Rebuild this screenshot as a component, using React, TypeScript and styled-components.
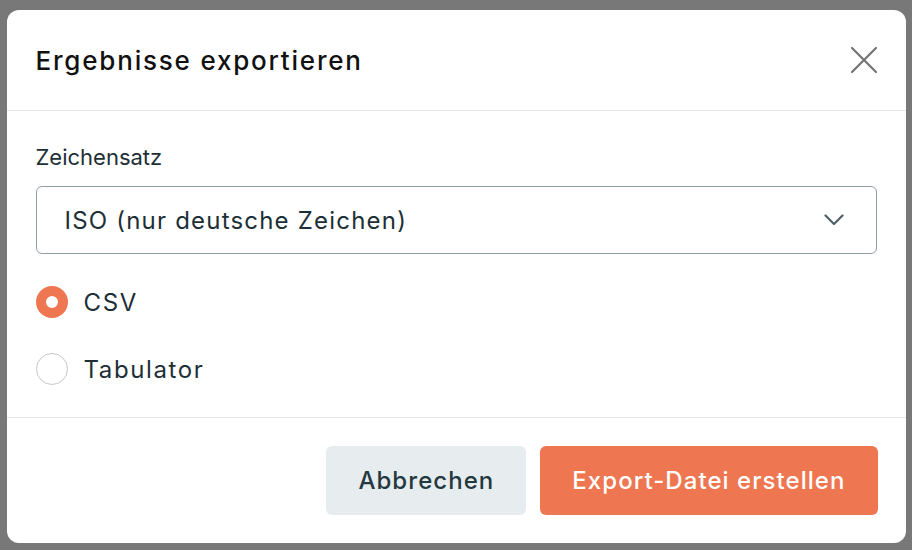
import React, { useState } from "react";
import styled, { createGlobalStyle } from "styled-components";

const GlobalStyle = createGlobalStyle`
  html, body { margin: 0; padding: 0; }
  body {
    background: #787878;
    font-family: Inter, "Open Sans", "Liberation Sans", sans-serif;
    height: 550px;
    overflow: hidden;
  }
  * { box-sizing: border-box; }
`;

const Backdrop = styled.div`
  display: flex;
  justify-content: center;
  padding-top: 10px;
  height: 550px;
  background: #787878;
`;

const Dialog = styled.div`
  width: 899px;
  height: 533px;
  background: #ffffff;
  border-radius: 12px;
  display: flex;
  flex-direction: column;
  overflow: hidden;
`;

const Header = styled.div`
  height: 101px;
  flex: none;
  display: flex;
  align-items: center;
  justify-content: space-between;
  padding: 0 28px 0 29px;
  border-bottom: 1px solid #e6e6e6;
`;

const Title = styled.h2`
  margin: 0;
  font-size: 26px;
  font-weight: 500;
  color: #111111;
  letter-spacing: 1.8px;
`;

const CloseButton = styled.button`
  border: none;
  background: transparent;
  padding: 0;
  width: 28px;
  height: 28px;
  display: flex;
  align-items: center;
  justify-content: center;
  cursor: pointer;
`;

const Body = styled.div`
  padding: 30px 29px 24px;
  display: flex;
  flex-direction: column;
  border-bottom: 1px solid #e6e6e6;
`;

const Label = styled.label`
  font-size: 22px;
  line-height: 32px;
  color: #1d2f36;
  margin-bottom: 13px;
`;

const Select = styled.div`
  height: 68px;
  border: 1px solid #8f9ea3;
  border-radius: 6px;
  display: flex;
  align-items: center;
  justify-content: space-between;
  padding: 0 32px 0 28px;
  font-size: 24px;
  letter-spacing: 1.2px;
  color: #1d2f36;
  margin-bottom: 24px;
`;

const RadioList = styled.div`
  display: flex;
  flex-direction: column;
  gap: 19px;
`;

const RadioRow = styled.label`
  height: 48px;
  display: flex;
  align-items: center;
  gap: 16px;
  font-size: 24px;
  letter-spacing: 1.6px;
  color: #1d2f36;
  cursor: pointer;
`;

const RadioCircle = styled.span<{ $checked: boolean }>`
  width: 32px;
  height: 32px;
  border-radius: 50%;
  flex: none;
  background: #ffffff;
  border: ${(p) => (p.$checked ? "10px solid #ee7650" : "1px solid #c8c8c8")};
`;

const Footer = styled.div`
  flex: 1;
  display: flex;
  justify-content: flex-end;
  align-items: flex-start;
  gap: 14px;
  padding: 28px 28px 0;
`;

const Button = styled.button<{ $primary?: boolean }>`
  height: 69px;
  padding: 0 32px;
  border: none;
  border-radius: 6px;
  font-family: inherit;
  font-size: 24px;
  font-weight: 500;
  letter-spacing: 1.05px;
  cursor: pointer;
  background: ${(p) => (p.$primary ? "#ee7650" : "#e7ecee")};
  color: ${(p) => (p.$primary ? "#ffffff" : "#23383f")};
`;

export default function App() {
  const [format, setFormat] = useState("csv");
  return (
    <>
      <GlobalStyle />
      <Backdrop>
        <Dialog>
          <Header>
            <Title>Ergebnisse exportieren</Title>
            <CloseButton aria-label="Schließen">
              <svg width="28" height="28" viewBox="0 0 28 28" fill="none">
                <path d="M2 2 L26 26 M26 2 L2 26" stroke="#737373" strokeWidth="2.2" strokeLinecap="round" />
              </svg>
            </CloseButton>
          </Header>
          <Body>
            <Label>Zeichensatz</Label>
            <Select>
              <span>ISO (nur deutsche Zeichen)</span>
              <svg width="20" height="12" viewBox="0 0 20 12" fill="none">
                <path d="M1.5 1.5 L10 10 L18.5 1.5" stroke="#4f6268" strokeWidth="2.2" strokeLinecap="round" strokeLinejoin="round" />
              </svg>
            </Select>
            <RadioList>
              <RadioRow onClick={() => setFormat("csv")}>
                <RadioCircle $checked={format === "csv"} />
                CSV
              </RadioRow>
              <RadioRow onClick={() => setFormat("tab")}>
                <RadioCircle $checked={format === "tab"} />
                Tabulator
              </RadioRow>
            </RadioList>
          </Body>
          <Footer>
            <Button>Abbrechen</Button>
            <Button $primary>Export-Datei erstellen</Button>
          </Footer>
        </Dialog>
      </Backdrop>
    </>
  );
}
